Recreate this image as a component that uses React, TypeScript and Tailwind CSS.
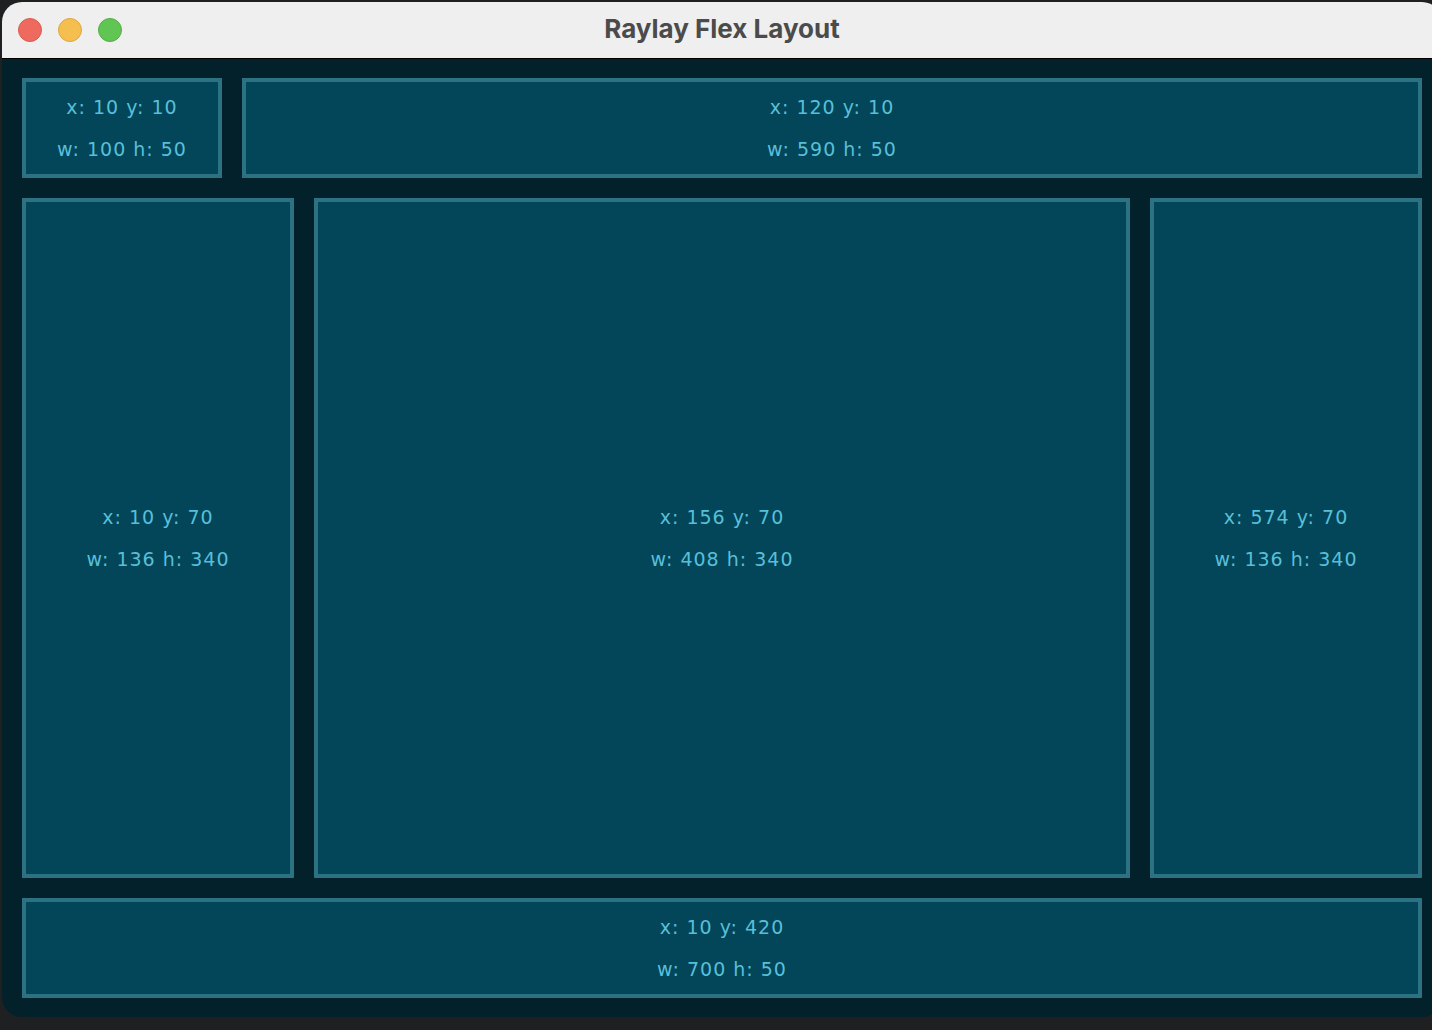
import React from "react";

type Rect = { x: number; y: number; w: number; h: number };

const Cell = ({ r, className }: { r: Rect; className: string }) => (
  <div
    className={`flex flex-col items-center justify-center gap-[22px] border-4 border-[#2c7283] bg-[#03465a] text-[19px] leading-[20px] tracking-[1px] text-[#58bfd8] ${className}`}
    style={{ fontFamily: '"DejaVu Sans", sans-serif' }}
  >
    <span>
      x: {r.x} y: {r.y}
    </span>
    <span>
      w: {r.w} h: {r.h}
    </span>
  </div>
);

const App = () => {
  return (
    <div className="h-[1030px] w-[1432px] overflow-hidden bg-[#1f2022] pl-[2px] pt-[2px]">
      <div className="flex h-[1015px] w-[1440px] flex-col overflow-hidden rounded-[20px] bg-[#02212a]">
        {/* title bar */}
        <div className="relative flex h-[57px] shrink-0 items-center justify-center border-b border-black bg-[#efefef] pb-[3px]">
          <div className="absolute left-[16px] top-[16px] flex gap-[16px]">
            <span className="h-[24px] w-[24px] rounded-full border border-[#d95b51] bg-[#ee6a5f]" />
            <span className="h-[24px] w-[24px] rounded-full border border-[#dca73f] bg-[#f5bf4f]" />
            <span className="h-[24px] w-[24px] rounded-full border border-[#52ad47] bg-[#61c554]" />
          </div>
          <span
            className="text-[26px] font-bold text-[#4b4b4b]"
            style={{ fontFamily: "Inter, sans-serif" }}
          >
            Raylay Flex Layout
          </span>
        </div>

        {/* layout body */}
        <div className="flex flex-1 flex-col gap-[20px] px-[20px] pb-[20px] pt-[19px]">
          <div className="flex h-[100px] gap-[20px]">
            <Cell r={{ x: 10, y: 10, w: 100, h: 50 }} className="w-[200px]" />
            <Cell r={{ x: 120, y: 10, w: 590, h: 50 }} className="flex-1" />
          </div>
          <div className="flex h-[680px] gap-[20px]">
            <Cell r={{ x: 10, y: 70, w: 136, h: 340 }} className="w-[272px]" />
            <Cell r={{ x: 156, y: 70, w: 408, h: 340 }} className="flex-1" />
            <Cell r={{ x: 574, y: 70, w: 136, h: 340 }} className="w-[272px]" />
          </div>
          <div className="flex h-[100px]">
            <Cell r={{ x: 10, y: 420, w: 700, h: 50 }} className="flex-1" />
          </div>
        </div>
      </div>
    </div>
  );
};

export default App;
